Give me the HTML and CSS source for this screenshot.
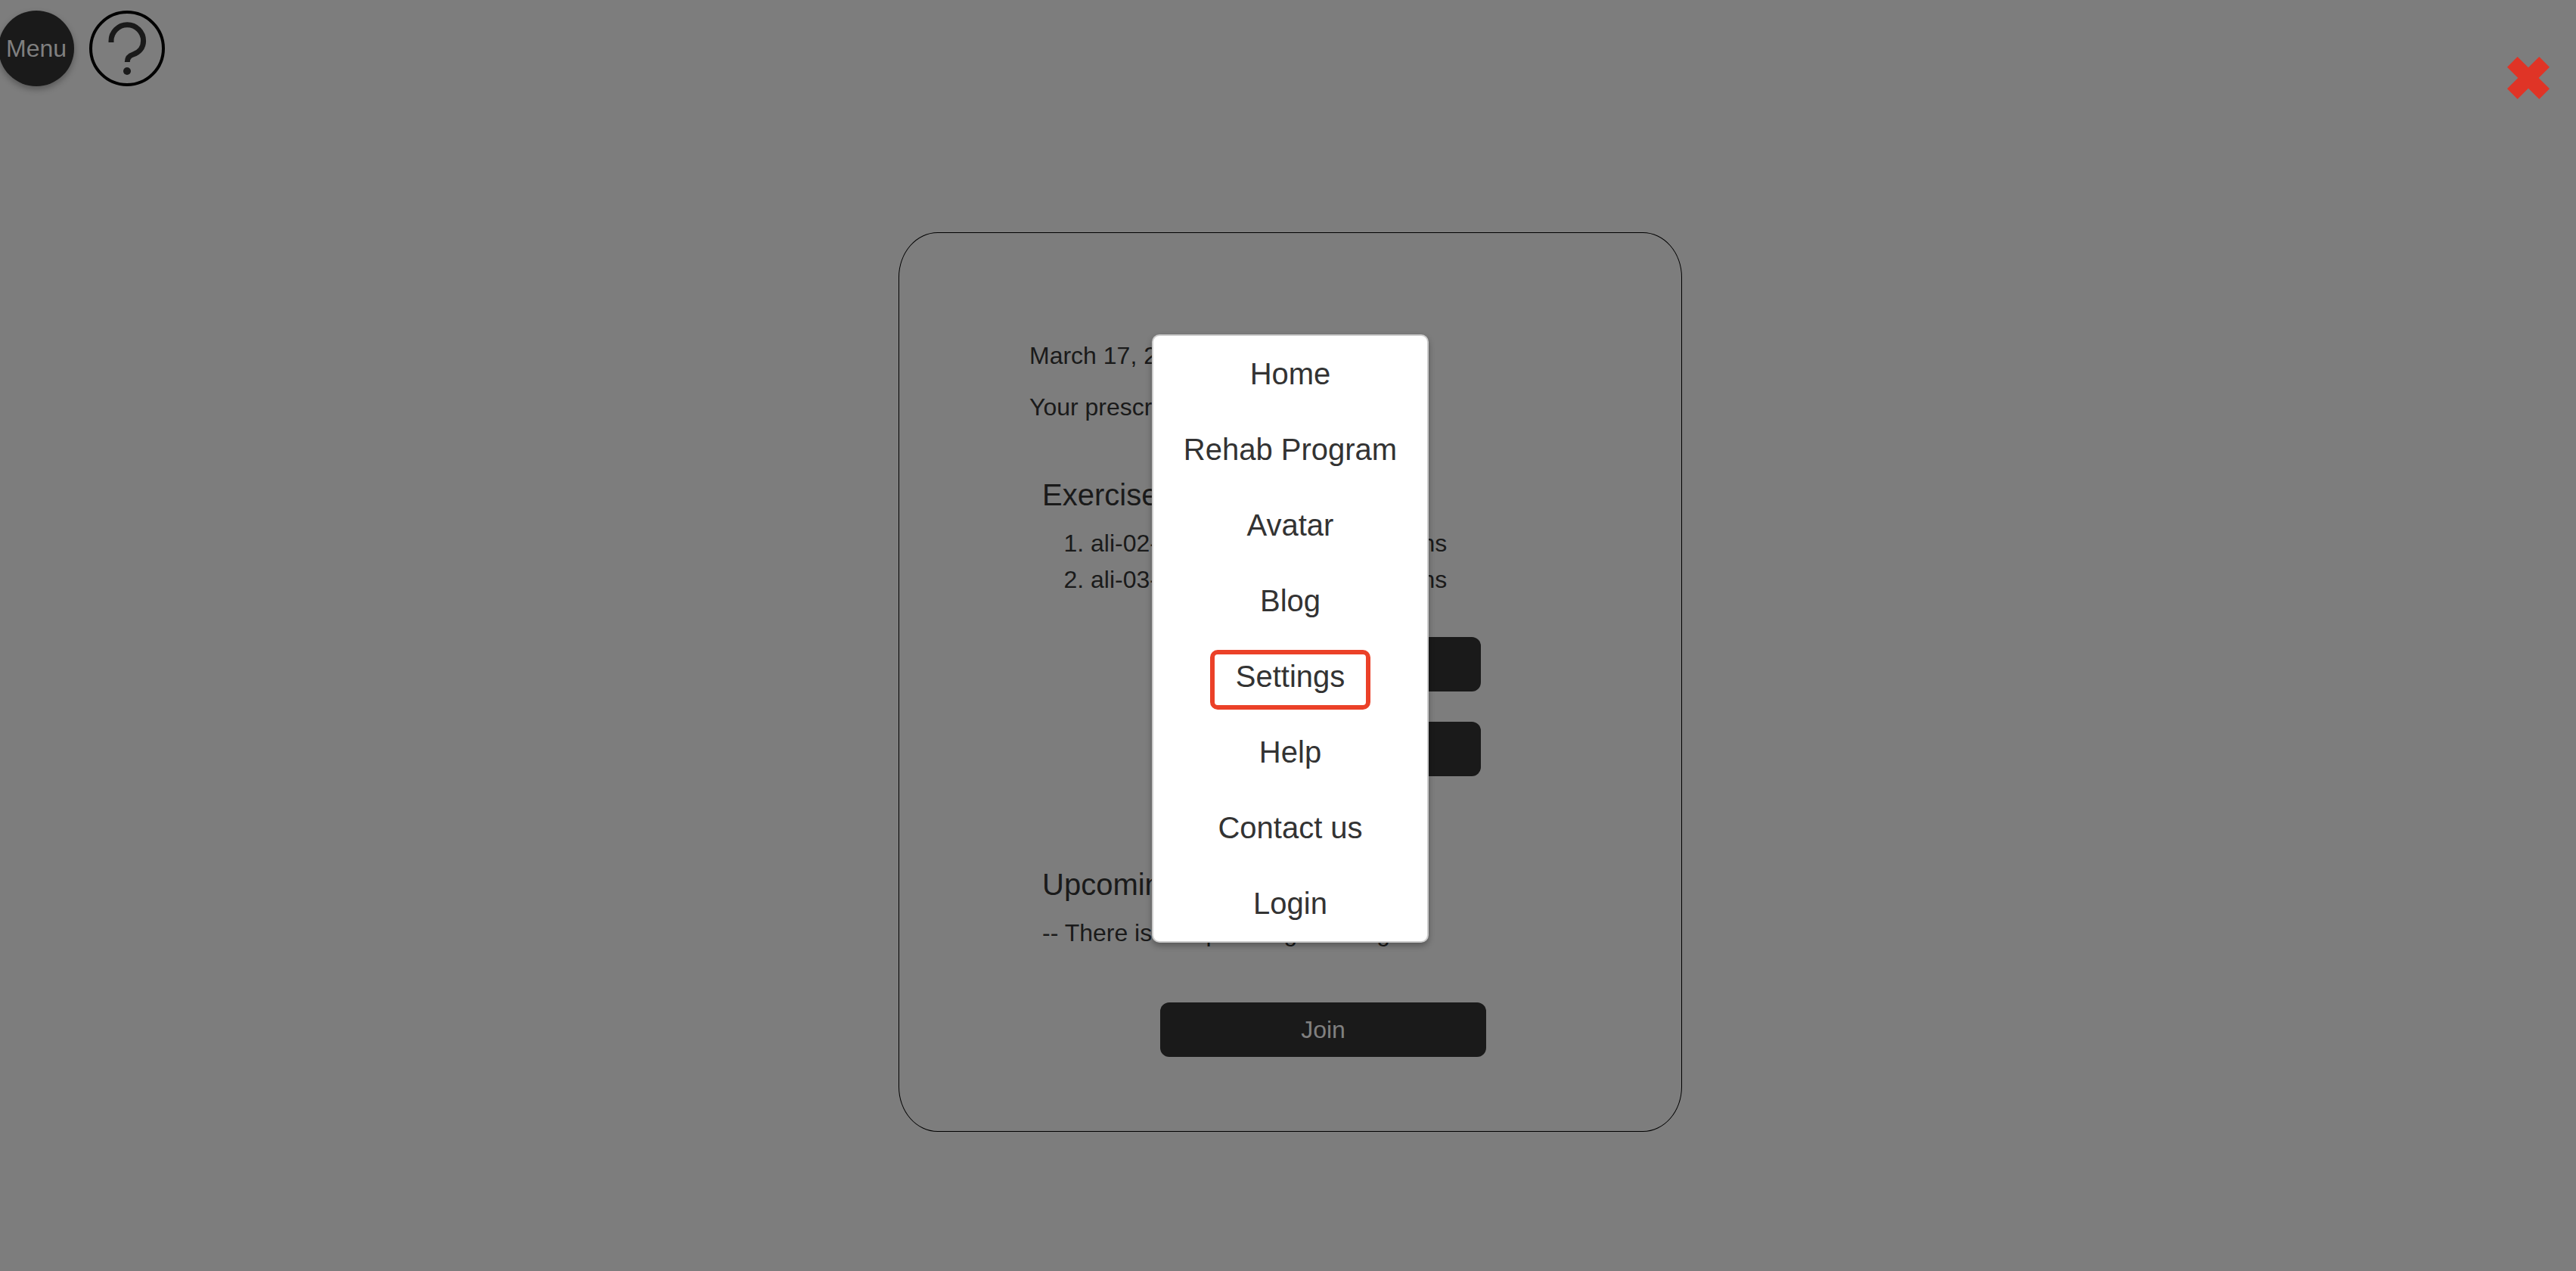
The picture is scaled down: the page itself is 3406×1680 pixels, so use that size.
FILE: index.html
```html
<!DOCTYPE html>
<html lang="en">
<head>
<meta charset="utf-8">
<meta name="viewport" content="width=device-width, initial-scale=1">
<title>Rehab Program</title>
<link rel="stylesheet" href="styles.css">
</head>
<body>
<header class="topbar">
  <button class="round menu-toggle" type="button">Menu</button>
  <button class="round help" type="button" aria-label="Help">
    <svg viewBox="0 0 100 100" aria-hidden="true">
      <circle cx="50" cy="50" r="48" fill="none" stroke="#000" stroke-width="4"/>
      <path d="M29 42V40A21.300 21.300 0 0 1 71.600 40C71.600 49 66 55.500 58 58C53 59.500 50.300 62.500 50.300 68" fill="none" stroke="#1a1a1a" stroke-width="7"/>
      <circle cx="50" cy="80" r="5" fill="#1a1a1a"/>
    </svg>
  </button>
  <button class="close" type="button" aria-label="Close menu">
    <svg viewBox="0 0 168 168" aria-hidden="true">
      <path d="M41 0L84 43L127 0L168 41L125 84L168 127L127 168L84 125L41 168L0 127L43 84L0 41Z" fill="#e03426"/>
    </svg>
  </button>
</header>
<main class="stage">
  <section class="card">
    <p class="line">March 17, 2021</p>
    <p class="line">Your prescription</p>
    <div class="group">
      <h2 class="heading">Exercises</h2>
      <ol class="exercises">
        <li>ali-02-wrist-stretch: 10 repetitions</li>
        <li>ali-03-wrist-stretch: 10 repetitions</li>
      </ol>
      <div class="actions">
        <button class="action" type="button" aria-label="Start"></button>
        <button class="action" type="button" aria-label="Details"></button>
      </div>
    </div>
    <div class="group meetings">
      <h2 class="heading">Upcoming</h2>
      <p class="note">-- There is no upcoming meeting</p>
      <button class="action join" type="button">Join</button>
    </div>
  </section>
  <nav class="menu" aria-label="Main">
    <a href="#home">Home</a>
    <a href="#rehab">Rehab Program</a>
    <a href="#avatar">Avatar</a>
    <a href="#blog">Blog</a>
    <a class="highlighted" href="#settings">Settings</a>
    <a href="#help">Help</a>
    <a href="#contact">Contact us</a>
    <a href="#login">Login</a>
  </nav>
</main>
</body>
</html>
```

FILE: styles.css
```css
* {
  box-sizing: border-box;
}

body {
  margin: 0;
  min-height: 100vh;
  background: #7d7d7d;
  color: #1a1a1a;
  font: 32px/48px "Liberation Sans", Arial, sans-serif;
  overflow-x: hidden;
}

button {
  margin: 0;
  padding: 0;
  border: 0;
  background: none;
  font: inherit;
  cursor: pointer;
}

svg {
  display: block;
  width: 100%;
  height: 100%;
}

.topbar {
  display: flex;
  align-items: flex-start;
  gap: 20px;
  padding: 14px 35px 0 0;
}

.round {
  flex: none;
  width: 100px;
  height: 100px;
  border-radius: 50%;
}

.menu-toggle {
  margin-left: -2px;
  background: #1a1a1a;
  color: #808080;
  box-shadow: 0 4px 8px rgba(0, 0, 0, 0.3);
}

.close {
  width: 56px;
  height: 56px;
  margin: 61px 0 0 auto;
}

/* The menu lies over the card and shares its centre line. */
.stage {
  position: relative;
  width: 1036px;
  max-width: 100%;
  margin: 176px auto 0;
  left: 3px;
}

.card {
  padding: 138px 172px 98px;
  border: 1px solid #000;
  border-radius: 5%;
}

.line {
  margin: 0 0 20px;
}

.group {
  margin-top: 68px;
  padding-left: 17px;
}

.heading {
  margin: 0 0 16px;
  font-size: 40px;
  font-weight: 400;
  line-height: 48px;
}

.exercises {
  margin: 0;
  padding-left: 64px;
}

.actions {
  display: flex;
  flex-direction: column;
  gap: 40px;
  margin: 52px 0 0 149px;
}

.action {
  display: block;
  width: 431px;
  min-height: 72px;
  padding: 12px;
  border-radius: 12px;
  background: #1a1a1a;
  color: #808080;
}

.meetings {
  margin-top: 119px;
}

.note {
  margin: 0;
}

.join {
  margin: 68px 0 0 156px;
}

.menu {
  position: absolute;
  top: 135px;
  left: 50%;
  width: 366px;
  transform: translateX(-50%);
  border: 2px solid #ccc;
  border-radius: 10px;
  background: #fff;
  box-shadow: 0 4px 8px rgba(0, 0, 0, 0.3);
}

.menu a {
  display: block;
  color: #333;
  font-size: 40px;
  line-height: 100px;
  text-align: center;
  text-decoration: none;
}

.highlighted {
  position: relative;
}

.highlighted::after {
  content: "";
  position: absolute;
  inset: 15px 75px 6px;
  border: 6px solid #eb4128;
  border-radius: 10px;
}
```
